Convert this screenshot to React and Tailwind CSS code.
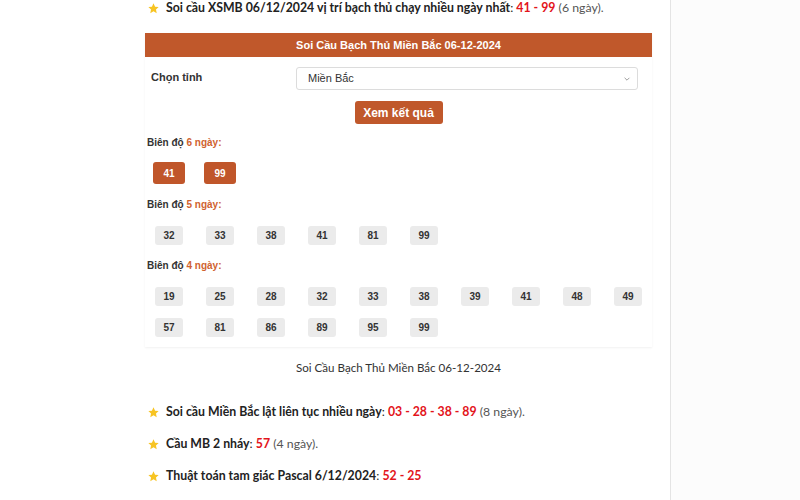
import React from 'react';

const Star = () => (
    <svg viewBox="0 0 24 24" className="w-[13px] h-[13px] shrink-0">
        <path d="M12 2.5l2.9 6.1 6.6.8-4.9 4.6 1.3 6.6L12 17.3l-5.9 3.3 1.3-6.6-4.9-4.6 6.6-.8z" fill="#f7c423" />
    </svg>
);

const Bullet = ({ label, nums, days }) => (
    <div className="flex items-center gap-[6px] h-4 text-[12.3px] text-[#222]">
        <Star />
        <span>
            <b className="font-bold">{label}</b>: <b className="font-bold text-[#e3141b]">{nums}</b>
            {days && <span className="text-[#555]"> ({days}).</span>}
        </span>
    </div>
);

const Chip = ({ n, active }) =>
    active ? (
        <span className="w-8 h-[22px] rounded-[3px] bg-[#c0562a] text-white text-[10px] font-bold flex items-center justify-center">{n}</span>
    ) : (
        <span className="w-7 h-[19px] rounded-[3px] bg-[#ebebeb] text-[#333] text-[10px] font-bold flex items-center justify-center">{n}</span>
    );

const groups = [
    { days: 6, rows: [['41', '99']], active: true },
    { days: 5, rows: [['32', '33', '38', '41', '81', '99']] },
    { days: 4, rows: [['19', '25', '28', '32', '33', '38', '39', '41', '48', '49'], ['57', '81', '86', '89', '95', '99']] },
];

export default function App() {
    return (
        <div className="flex h-[500px] w-[800px] overflow-hidden" style={{ fontFamily: 'Lato, "Open Sans", sans-serif' }}>
            <div className="w-[670px] bg-white pl-[147px] pr-[18px]">
                <div className="flex items-center gap-[6px] h-4 text-[12.3px] text-[#222]">
                    <Star />
                    <span>
                        <b className="font-bold">Soi cầu XSMB 06/12/2024 vị trí bạch thủ chạy nhiều ngày nhất</b>: <b className="font-bold text-[#e3141b]">41 - 99</b>
                        <span className="text-[#555]"> (6 ngày).</span>
                    </span>
                </div>

                {/* card */}
                <div className="mt-[17px] -ml-[2px] w-[507px] shadow-[0_1px_2px_rgba(0,0,0,0.06)]" style={{ fontFamily: '"Liberation Sans", Arial, sans-serif' }}>
                    <div className="h-6 bg-[#c0582b] flex items-center justify-center text-white text-[11px] font-bold">
                        Soi Cầu Bạch Thủ Miền Bắc 06-12-2024
                    </div>
                    <div className="px-[5px] pb-[10px]">
                        <div className="flex items-center mt-[10px]">
                            <span className="w-[146px] pl-[1px] text-[11px] font-bold text-[#333] -mt-[2px]">Chọn tỉnh</span>
                            <div className="w-[342px] h-[23px] border border-[#dcdcdc] rounded-[3px] flex items-center justify-between pl-[11px] pr-[6px] text-[11px] text-[#333]">
                                <span>Miền Bắc</span>
                                <svg viewBox="0 0 10 10" className="w-[8px] h-[8px]">
                                    <path d="M2 3.5l3 3 3-3" fill="none" stroke="#999" strokeWidth="1.2" />
                                </svg>
                            </div>
                        </div>
                        <div className="flex justify-center mt-[11px]">
                            <button className="w-[88px] h-[23px] rounded-[3px] bg-[#c0582b] text-white text-[12px] font-bold">Xem kết quả</button>
                        </div>

                        {groups.map((g) => (
                            <div key={g.days}>
                                <div className={`text-[10px] font-bold text-[#333] -ml-[3px] ${g.days === 6 ? 'mt-[11px]' : 'mt-[13px]'}`}>
                                    Biên độ <span className="text-[#d0622f]">{g.days} ngày:</span>
                                </div>
                                {g.rows.map((row, i) => (
                                    <div key={i} className={`flex ${g.active ? 'gap-[19px] mt-[12px] ml-[3px]' : 'gap-[23px] ml-[5px]'} ${!g.active && i === 0 ? 'mt-[14px]' : ''} ${i > 0 ? 'mt-[12px]' : ''}`}>
                                        {row.map((n) => (
                                            <Chip key={n} n={n} active={g.active} />
                                        ))}
                                    </div>
                                ))}
                            </div>
                        ))}
                    </div>
                </div>

                <div className="mt-[12px] text-center w-[503px] text-[11.6px] text-[#333]">Soi Cầu Bạch Thủ Miền Bắc 06-12-2024</div>

                <div className="mt-[28px] flex flex-col gap-[16px]">
                    <Bullet label="Soi cầu Miền Bắc lật liên tục nhiều ngày" nums="03 - 28 - 38 - 89" days="8 ngày" />
                    <Bullet label="Cầu MB 2 nháy" nums="57" days="4 ngày" />
                    <Bullet label="Thuật toán tam giác Pascal 6/12/2024" nums="52 - 25" />
                </div>
            </div>
            <div className="flex-1 border-l border-[#e4e4e4] bg-[#fcfcfc]" />
        </div>
    );
}
